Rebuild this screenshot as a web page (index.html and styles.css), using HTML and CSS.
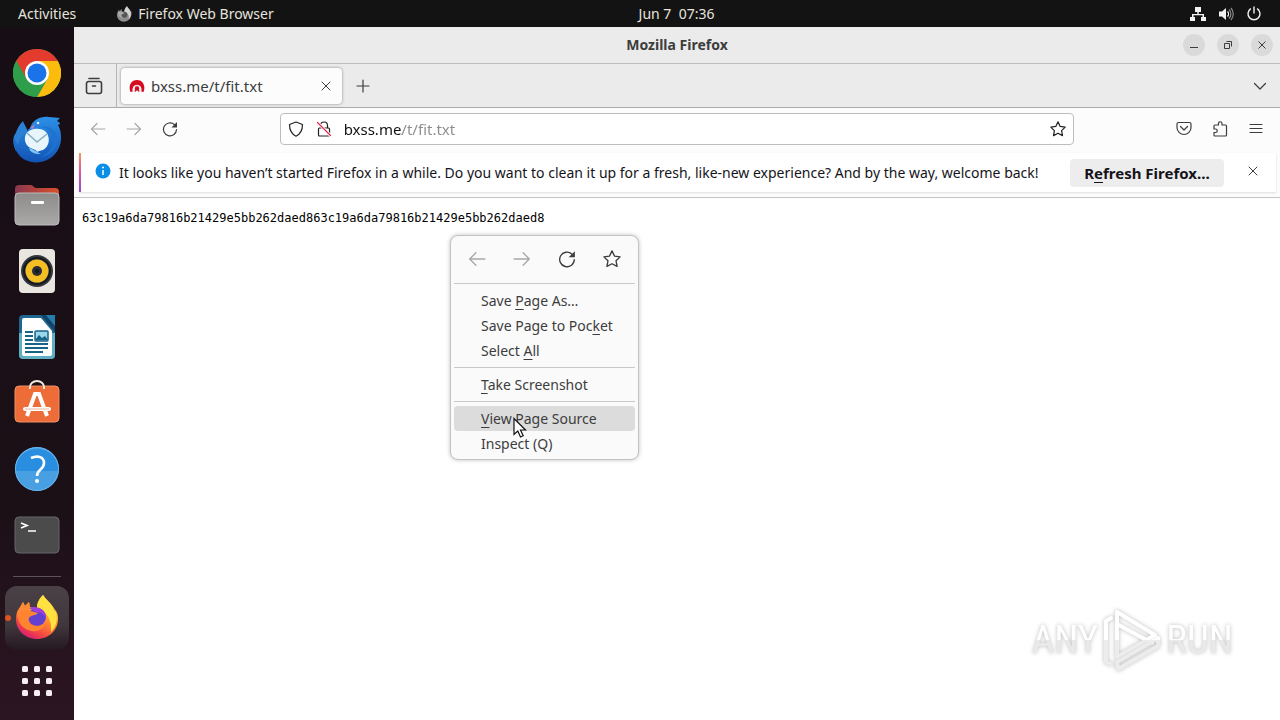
FILE: index.html
```html
<!DOCTYPE html>
<html lang="en">
<head>
    <meta charset="UTF-8">
    <meta name="viewport" content="width=device-width, initial-scale=1.0">
    <title>Mozilla Firefox</title>
    <link rel="stylesheet" href="styles.css">
</head>
<body>
    <header class="topbar">
        <div class="topbar-left">
            <button class="topbar-button">Activities</button>
            <button class="topbar-button app-menu">
                <svg width="16" height="16" viewBox="0 0 48 48">
                    <path fill="#8d8d8d" d="M3 27C3 20 6 15 9 11l2 5 6-7 1 7 7 2C25 10 29 4 33 1c2 6 9 9 11 16l2-1c3 17-7 31-22 31C12 47 3 39 3 27z"/>
                    <path fill="#d2d2d2" d="M33 1c2 6 9 9 11 16 2 8 0 17-6 23 3-12-3-20-13-22C25 10 29 4 33 1z"/>
                    <circle cx="25" cy="26" r="9" fill="#555"/>
                    <path fill="#aaa" d="M6 19c6-4 12 0 20 1-3 4-8 3-10 6-1 3 2 7 7 9-10 2-17-5-17-16z"/>
                </svg>
                <span>Firefox Web Browser</span>
            </button>
        </div>
        <button class="topbar-button clock">Jun 7&nbsp; 07:36</button>
        <button class="topbar-button system" aria-label="System">
            <svg width="16" height="16" viewBox="0 0 16 16" fill="#f2f2f2">
                <path d="M5 1h6v5H8.700v2H14v3h2v4h-5v-4h1.500V9.300h-9V11H5v4H0v-4h2V8h5.300V6H5z"/>
            </svg>
            <svg width="16" height="16" viewBox="0 0 16 16">
                <path fill="#f2f2f2" d="M1 5.500h3L8 2v12l-4-3.500H1z"/>
                <path fill="none" stroke="#f2f2f2" stroke-width="1.300" d="M9.500 5.500c1.300 1.300 1.300 3.700 0 5"/>
                <path fill="none" stroke="#8a8a8a" stroke-width="1.200" d="M11 3.500c2.500 2.500 2.500 6.500 0 9M13 2c3 3.500 3 8.500 0 12"/>
            </svg>
            <svg width="16" height="16" viewBox="0 0 16 16" fill="none" stroke="#f2f2f2" stroke-width="1.400" stroke-linecap="round">
                <path d="M8 1v6M4.500 2.900a6 6 0 1 0 7 0"/>
            </svg>
        </button>
    </header>

    <div class="desktop">
        <nav class="dock" aria-label="Dock">
            <button class="dock-item" aria-label="Google Chrome">
                <svg width="48" height="48" viewBox="0 0 48 48">
                    <circle cx="24" cy="24" r="24" fill="#2f9e4b"/>
                    <path fill="#fbbc0e" d="M24 12h20.800A24 24 0 0 1 24 48l10.400-18z"/>
                    <path fill="#e33b2e" d="M3.200 12a24 24 0 0 1 41.600 0H24L13.600 30z"/>
                    <path fill="#2f9e4b" d="M3.200 12l10.400 18L24 36l10.400-6L24 48A24 24 0 0 1 3.200 12z"/>
                    <circle cx="24" cy="24" r="12" fill="#fff"/>
                    <circle cx="24" cy="24" r="9.500" fill="#1a73e8"/>
                </svg>
            </button>
            <button class="dock-item" aria-label="Thunderbird">
                <svg width="48" height="48" viewBox="0 0 48 48">
                    <defs>
                        <linearGradient id="bird" x1="0" y1="0" x2="0" y2="1">
                            <stop offset="0" stop-color="#2c90e8"/>
                            <stop offset="1" stop-color="#1253b4"/>
                        </linearGradient>
                    </defs>
                    <path fill="#2b80d6" d="M1 21c2-2 3-9 9-15 1 4 5 7 4 12l-2 10L3 36C0 30 0 25 1 21z"/>
                    <path fill="url(#bird)" d="M17 13C20 4 28 1 36 2c4 0 7 1 11 1l-3 3c2 1 3 2 3 3l-2 1c5 9 4 21-3 29-9 11-28 11-36 1-5-6-6-13-5-18 1 4 3 6 4 8 1-6 6-12 12-17z"/>
                    <path fill="#1e73d0" d="M28 12c9 1 14 8 12 17-2 7-7 11-13 13 8-1 16-6 17-15C46 18 39 10 28 12z"/>
                    <path fill="#e9f5fc" d="M13 19c4-6 15-7 20-2 5 6 3 15-3 18-3 1-5 1-6 2 0-1-1-2-4-3-7-2-10-9-7-15z"/>
                    <path fill="none" stroke="#87aebc" stroke-width="1.500" d="M14 18l10 9 10-8"/>
                    <path fill="#83c7f4" d="M16 33c4 1 6 3 12 6-7 0-11-2-12-6z"/>
                    <circle cx="25" cy="8" r="1.300" fill="#d9efff"/>
                    <path fill="#bd82bb" d="M17 13l5-4-2 5z"/>
                </svg>
            </button>
            <button class="dock-item" aria-label="Files">
                <svg width="48" height="48" viewBox="0 0 48 48">
                    <defs>
                        <linearGradient id="folderBack">
                            <stop offset="0" stop-color="#89374f"/>
                            <stop offset="1" stop-color="#dc5029"/>
                        </linearGradient>
                        <linearGradient id="folderFront" x1="0" y1="0" x2="0" y2="1">
                            <stop offset="0" stop-color="#8d8c8b"/>
                            <stop offset="1" stop-color="#aaa9a8"/>
                        </linearGradient>
                    </defs>
                    <path fill="url(#folderBack)" d="M2 8a4 4 0 0 1 4-4h12c2 0 3 3 5 3h19a4 4 0 0 1 4 4v18H2z"/>
                    <rect x="2" y="12" width="44" height="32" rx="4" fill="url(#folderFront)" stroke="#bdbcbb"/>
                    <rect x="18" y="20" width="13" height="3" rx="1" fill="#fff"/>
                </svg>
            </button>
            <button class="dock-item" aria-label="Rhythmbox">
                <svg width="48" height="48" viewBox="0 0 48 48">
                    <rect x="6" y="2" width="36" height="44" rx="4" fill="#e9e6df"/>
                    <circle cx="24" cy="24" r="16" fill="#34363d"/>
                    <circle cx="24" cy="24" r="13" fill="none" stroke="#17191f" stroke-width="2"/>
                    <circle cx="24" cy="24" r="11.500" fill="#f4bf22"/>
                    <circle cx="24" cy="24" r="5" fill="#292c34"/>
                    <circle cx="24" cy="24" r="2" fill="#111820"/>
                </svg>
            </button>
            <button class="dock-item" aria-label="LibreOffice Writer">
                <svg width="48" height="48" viewBox="0 0 48 48">
                    <path fill="#1e658f" d="M10 2h32v40a4 4 0 0 1-4 4H10a4 4 0 0 1-4-4V6a4 4 0 0 1 4-4z"/>
                    <path fill="#60afc3" d="M6 20h36v22a4 4 0 0 1-4 4H10a4 4 0 0 1-4-4z"/>
                    <path fill="#fff" d="M11 5h17l11 13v23a2 2 0 0 1-2 2H11a2 2 0 0 1-2-2V7a2 2 0 0 1 2-2z"/>
                    <path fill="#124467" d="M28 2h5l9 11v6z"/>
                    <path fill="#237eac" d="M33 2h9v11z"/>
                    <path stroke="#176487" stroke-width="2" d="M12 19h8M12 23h8M12 27h8M12 31h23M12 35h23M12 39h18"/>
                    <rect x="22" y="18" width="13" height="10" rx="1" fill="#9bd6eb" stroke="#176487" stroke-width="1.500"/>
                    <path fill="#176487" d="M22 27l4-5 3 3 3-2 3 4z"/>
                </svg>
            </button>
            <button class="dock-item" aria-label="Ubuntu Software">
                <svg width="48" height="48" viewBox="0 0 48 48">
                    <rect x="2" y="7" width="44" height="36" rx="4" fill="#ed6c38" stroke="#ef9068"/>
                    <path fill="none" stroke="#f4e9dc" stroke-width="2" d="M17 10V8a7 6 0 0 1 14 0v2"/>
                    <path fill="none" stroke="#fff" stroke-width="4" d="M14 37l8-22h4l8 22"/>
                    <path stroke="#fff" stroke-width="4" stroke-linecap="round" d="M12 30h24"/>
                    <path stroke="#e8b7a1" d="M12 30h24"/>
                </svg>
            </button>
            <button class="dock-item" aria-label="Help">
                <svg width="48" height="48" viewBox="0 0 48 48">
                    <circle cx="24" cy="24" r="22" fill="#48a0e3"/>
                    <path fill="#298de0" d="M2 26a22 22 0 1 1 44 0z"/>
                    <circle cx="24" cy="24" r="21.500" fill="none" stroke="#67b4ec"/>
                    <path fill="none" stroke="#fff" stroke-width="2.600" d="M18 13c7-3 13-1 13 5 0 7-7 6-7 13"/>
                    <circle cx="24" cy="36" r="2" fill="#fff"/>
                </svg>
            </button>
            <button class="dock-item" aria-label="Terminal">
                <svg width="48" height="48" viewBox="0 0 48 48">
                    <rect x="2" y="6" width="44" height="36" rx="4" fill="#4b4b4b" stroke="#676767"/>
                    <path fill="none" stroke="#fff" stroke-width="1.700" d="M8 12l6 2.500L8 17M15 20h8"/>
                </svg>
            </button>
            <hr class="dock-line">
            <button class="dock-item running" aria-label="Firefox">
                <svg width="48" height="48" viewBox="0 0 48 48">
                    <defs>
                        <linearGradient id="fox" x1="0.850" y1="0" x2="0.300" y2="1">
                            <stop offset="0" stop-color="#ffdc3e"/>
                            <stop offset="0.500" stop-color="#ff9130"/>
                            <stop offset="0.800" stop-color="#f34645"/>
                            <stop offset="1" stop-color="#d81b76"/>
                        </linearGradient>
                    </defs>
                    <path fill="url(#fox)" d="M3 25c0-6 2-10 5-13l2-4 2 4 4-4 1 5 7 1c0-6 3-10 6-13 3 5 7 7 10 12l3 4c2 3 2 6 2 8 0 11-9 20-21 20S3 36 3 25z"/>
                    <path fill="#ffe13f" d="M30 1c3 5 7 7 10 12l1 4 2 1c2 8 0 15-5 20 1-10-2-19-14-24 0-6 3-10 6-13z"/>
                    <circle cx="24" cy="23" r="9" fill="#6240d0"/>
                    <path fill="#a13dda" d="M16 14c8-3 17 1 17 10-3-5-6-6-10-6z"/>
                    <path fill="#ff8430" d="M4 18c4-4 9-2 13-1 3 1 6 1 8 2-3 3-8 2-9 5-2 4 2 8 8 8 4 0 6-1 8-3-1 6-7 9-13 8C10 36 4 28 4 18z"/>
                    <path fill="#ff8a35" d="M7 13l3-5 2 4 4-4 1 5-3 2-9 4z"/>
                </svg>
            </button>
            <button class="dock-item show-apps" aria-label="Show Applications">
                <svg width="32" height="32" viewBox="0 0 32 32" fill="#f7edf3">
                    <rect x="1" y="1" width="6" height="6" rx="1.500"/><rect x="13" y="1" width="6" height="6" rx="1.500"/><rect x="25" y="1" width="6" height="6" rx="1.500"/>
                    <rect x="1" y="13" width="6" height="6" rx="1.500"/><rect x="13" y="13" width="6" height="6" rx="1.500"/><rect x="25" y="13" width="6" height="6" rx="1.500"/>
                    <rect x="1" y="25" width="6" height="6" rx="1.500"/><rect x="13" y="25" width="6" height="6" rx="1.500"/><rect x="25" y="25" width="6" height="6" rx="1.500"/>
                </svg>
            </button>
        </nav>

        <main class="window">
            <div class="titlebar">
                <h1>Mozilla Firefox</h1>
                <div class="window-controls">
                    <button aria-label="Minimize"><svg width="16" height="16" viewBox="0 0 16 16"><path d="M4 10.500h8"/></svg></button>
                    <button aria-label="Restore"><svg width="16" height="16" viewBox="0 0 16 16"><path d="M4.500 6.500h5v5h-5zM6.500 4.500h5v5"/></svg></button>
                    <button aria-label="Close window"><svg width="16" height="16" viewBox="0 0 16 16"><path d="M4.500 4.500l7 7M11.500 4.500l-7 7"/></svg></button>
                </div>
            </div>

            <div class="tabstrip">
                <button class="icon-button view-button" aria-label="Firefox View">
                    <svg width="18" height="18" viewBox="0 0 18 18"><path d="M4 1.500h10M3.500 4.500h11a2 2 0 0 1 2 2v8a2 2 0 0 1-2 2h-11a2 2 0 0 1-2-2v-8a2 2 0 0 1 2-2zM7.500 9h3"/></svg>
                </button>
                <div class="tab">
                    <button class="tab-label">
                        <svg width="16" height="16" viewBox="0 0 16 16">
                            <path fill="#d70b20" d="M1.500 14C-1 8 2 2 8 2s9 6 6.500 12l-3-.5c1-3-.5-5.500-3.500-5.500s-4.500 2.500-3.500 5.500z"/>
                            <path fill="none" stroke="#fff" stroke-width="1.200" d="M4.200 14C2.500 5 13.500 5 11.800 14"/>
                            <circle cx="8" cy="10.500" r="2.200" fill="#d70b20"/>
                            <path stroke="#d70b20" stroke-width="1.500" d="M6 13.500l1-2M10 13.500l-1-2"/>
                        </svg>
                        <span>bxss.me/t/fit.txt</span>
                    </button>
                    <button class="icon-button tab-close" aria-label="Close tab"><svg width="16" height="16" viewBox="0 0 16 16"><path d="M4 4l8 8M12 4l-8 8"/></svg></button>
                </div>
                <button class="icon-button" aria-label="New tab"><svg width="16" height="16" viewBox="0 0 16 16"><path d="M8 2v12M2 8h12"/></svg></button>
                <button class="icon-button all-tabs" aria-label="List all tabs"><svg width="16" height="16" viewBox="0 0 16 16"><path d="M2.500 5.500L8 11l5.500-5.500"/></svg></button>
            </div>

            <div class="toolbar">
                <button class="icon-button" aria-label="Back" disabled><svg width="16" height="16" viewBox="0 0 16 16"><path d="M15 8H1.500M7 2.500L1.500 8 7 13.500"/></svg></button>
                <button class="icon-button" aria-label="Forward" disabled><svg width="16" height="16" viewBox="0 0 16 16"><path d="M1 8h13.500M9 2.500L14.500 8 9 13.500"/></svg></button>
                <button class="icon-button" aria-label="Reload"><svg width="16" height="16" viewBox="0 0 16 16"><path d="M14.500 8.500a6.500 6.500 0 1 1-2.200-5"/><path class="solid" d="M15 1v5.500H9.500z"/></svg></button>
                <div class="spring"></div>
                <div class="urlbar">
                    <button class="url-button" aria-label="Tracking protection"><svg width="16" height="16" viewBox="0 0 16 16"><path d="M8 1l6.500 2.500c0 5-1 9-6.500 11.700C2.500 12.500 1.500 8.500 1.500 3.500z"/></svg></button>
                    <button class="url-button" aria-label="Connection not secure">
                        <svg width="16" height="16" viewBox="0 0 16 16"><path d="M4.500 7V4.500a3.500 3.500 0 0 1 7 0V7M3.500 7h9a1 1 0 0 1 1 1v6a1 1 0 0 1-1 1h-9a1 1 0 0 1-1-1V8a1 1 0 0 1 1-1z"/><path stroke="#fff" stroke-width="3" d="M2 2l13 13"/><path class="strike" d="M1.500 1.500l13 13"/></svg>
                    </button>
                    <input class="url-input" type="text" value="bxss.me/t/fit.txt" aria-label="Address" spellcheck="false">
                    <button class="url-button" aria-label="Bookmark this page"><svg width="16" height="16" viewBox="0 0 16 16"><path d="M8 .8l2.200 4.600 5 .7-3.600 3.500.9 5L8 12.200l-4.500 2.400.9-5L.8 6.100l5-.7z"/></svg></button>
                </div>
                <div class="spring"></div>
                <button class="icon-button" aria-label="Save to Pocket"><svg width="16" height="16" viewBox="0 0 16 16"><path d="M2.500 1.500h11A1.500 1.500 0 0 1 15 3v3.500a7 7 0 0 1-14 0V3a1.500 1.500 0 0 1 1.500-1.500zM4.500 5.500L8 9l3.500-3.500"/></svg></button>
                <button class="icon-button" aria-label="Extensions"><svg width="16" height="16" viewBox="0 0 16 16"><path d="M6.500 4V2.500a1.700 1.700 0 0 1 3.500 0V4h3.500a1 1 0 0 1 1 1v9a1 1 0 0 1-1 1H3a1 1 0 0 1-1-1v-2.500h1.500a1.700 1.700 0 0 0 0-3.500H2V5a1 1 0 0 1 1-1z"/></svg></button>
                <button class="icon-button" aria-label="Open application menu"><svg width="16" height="16" viewBox="0 0 16 16"><path d="M2 3.500h12M2 7.500h12M2 11.500h12"/></svg></button>
            </div>

            <div class="notice-area">
                <div class="notice" role="alert">
                    <svg class="notice-icon" width="16" height="16" viewBox="0 0 16 16"><circle cx="8" cy="8" r="7.500" fill="#0a8ee8"/><circle cx="8" cy="4.500" r="1" fill="#fff"/><path stroke="#fff" stroke-width="1.500" d="M8 7v5"/></svg>
                    <p>It looks like you haven’t started Firefox in a while. Do you want to clean it up for a fresh, like-new experience? And by the way, welcome back!</p>
                    <button class="refresh-button">R<u>e</u>fresh Firefox…</button>
                    <button class="icon-button notice-close" aria-label="Close notification"><svg width="16" height="16" viewBox="0 0 16 16"><path d="M4 4l8 8M12 4l-8 8"/></svg></button>
                </div>
            </div>

            <div class="page">
                <pre>63c19a6da79816b21429e5bb262daed863c19a6da79816b21429e5bb262daed8</pre>

                <div class="context-menu" role="menu">
                    <div class="menu-icons">
                        <button aria-label="Go back" disabled><svg width="18" height="18" viewBox="0 0 16 16"><path d="M15 8H1.500M7 2.500L1.500 8 7 13.500"/></svg></button>
                        <button aria-label="Go forward" disabled><svg width="18" height="18" viewBox="0 0 16 16"><path d="M1 8h13.500M9 2.500L14.500 8 9 13.500"/></svg></button>
                        <button aria-label="Reload page"><svg width="18" height="18" viewBox="0 0 16 16"><path d="M14.500 8.500a6.500 6.500 0 1 1-2.200-5"/><path class="solid" d="M15 1v5.500H9.500z"/></svg></button>
                        <button aria-label="Bookmark page"><svg width="18" height="18" viewBox="0 0 16 16"><path d="M8 .8l2.200 4.600 5 .7-3.600 3.500.9 5L8 12.200l-4.500 2.400.9-5L.8 6.100l5-.7z"/></svg></button>
                    </div>
                    <hr>
                    <button class="menu-item" role="menuitem">Save <u>P</u>age As…</button>
                    <button class="menu-item" role="menuitem">Save Page to Poc<u>k</u>et</button>
                    <button class="menu-item" role="menuitem">Select <u>A</u>ll</button>
                    <hr>
                    <button class="menu-item" role="menuitem"><u>T</u>ake Screenshot</button>
                    <hr>
                    <button class="menu-item active" role="menuitem"><u>V</u>iew Page Source</button>
                    <button class="menu-item" role="menuitem">Inspect (Q)</button>
                    <svg class="cursor" width="14" height="22" viewBox="0 0 14 22"><path fill="#fff" stroke="#111" stroke-width="1.200" d="M1 1.500v16l3.800-3.500 2.700 6 2.700-1.200-2.700-5.800h5z"/></svg>
                </div>

                <div class="watermark">
                    <span>ANY</span>
                    <svg width="60" height="66" viewBox="0 0 60 66">
                        <defs>
                            <linearGradient id="mark" gradientUnits="userSpaceOnUse" x1="0" y1="0" x2="0" y2="66">
                                <stop offset="0.500" stop-color="#fff"/>
                                <stop offset="0.500" stop-color="#ececec"/>
                            </linearGradient>
                        </defs>
                        <g fill="none" stroke="url(#mark)" stroke-width="4" stroke-linejoin="round" stroke-linecap="round">
                            <path d="M9 11l-5 3v41l5 2"/>
                            <path d="M50 36L15 17v33l38-22L15 5v12"/>
                            <path d="M16 62l40-23v-8L15 55z"/>
                        </g>
                    </svg>
                    <span>RUN</span>
                </div>
            </div>
        </main>
    </div>
</body>
</html>
```

FILE: styles.css
```css
* {
    box-sizing: border-box;
}
body {
    margin: 0;
    min-height: 100vh;
    display: flex;
    flex-direction: column;
    font-family: "Noto Sans", sans-serif;
    font-size: 14px;
    line-height: 20px;
    color: #3d3d3d;
    background: #fff;
}
button {
    margin: 0;
    padding: 0;
    border: none;
    background: none;
    color: inherit;
    font: inherit;
}
svg {
    display: block;
    flex: none;
}
u {
    text-underline-offset: 3px;
    text-decoration-thickness: 1px;
    text-decoration-skip-ink: none;
}

/* top bar */
.topbar {
    display: grid;
    grid-template-columns: 17fr auto 15fr;
    align-items: center;
    height: 27px;
    padding: 0 18px;
    background: #131313;
    color: #e6e3df;
}
.topbar-left {
    display: flex;
    gap: 40px;
}
.topbar-button {
    display: flex;
    align-items: center;
    gap: 6px;
    white-space: nowrap;
}
.system {
    justify-self: end;
    gap: 12px;
}

/* dock */
.desktop {
    flex: 1;
    display: flex;
}
.dock {
    display: flex;
    flex-direction: column;
    align-items: center;
    gap: 2px;
    flex: none;
    width: 74px;
    padding-top: 14px;
    background: linear-gradient(#170d14, #1c1017 70%, #2c1522);
}
.dock-item {
    display: flex;
    align-items: center;
    justify-content: center;
    width: 64px;
    height: 64px;
    border-radius: 12px;
}
.dock-item.running {
    position: relative;
    background: linear-gradient(#4a4146, #41383d 60%, #251820);
}
.running::before {
    content: "";
    position: absolute;
    left: 0;
    top: 29px;
    width: 6px;
    height: 6px;
    border-radius: 50%;
    background: #df5224;
}
.dock-line {
    width: 48px;
    margin: 7px 0;
    border: none;
    border-top: 1px solid #5d5459;
}
.show-apps {
    height: 58px;
}

/* window */
.window {
    flex: 1;
    min-width: 0;
    display: flex;
    flex-direction: column;
}
.titlebar {
    display: grid;
    grid-template-columns: 1fr auto 1fr;
    align-items: center;
    height: 37px;
    padding: 0 7px;
    background: #ebebeb;
    border-bottom: 1px solid #bcbcbc;
}
.titlebar h1 {
    grid-column: 2;
    margin: 0;
    font-size: 14px;
    line-height: 20px;
    font-weight: bold;
}
.window-controls {
    display: flex;
    justify-content: flex-end;
    gap: 12px;
}
.window-controls button {
    display: flex;
    align-items: center;
    justify-content: center;
    width: 22px;
    height: 22px;
    border-radius: 50%;
    background: #dadada;
}
.window-controls svg {
    fill: none;
    stroke: #3d3d3d;
}
.icon-button {
    display: flex;
    align-items: center;
    justify-content: center;
    width: 36px;
    height: 32px;
    flex: none;
}
.icon-button svg,
.url-button svg,
.menu-icons svg {
    fill: none;
    stroke: #3d3d3d;
    stroke-width: 1.2;
    stroke-linejoin: round;
    stroke-linecap: round;
}
button:disabled svg {
    stroke: #a8a8a8;
}
svg .solid {
    fill: #3d3d3d;
    stroke: none;
}
svg .strike {
    stroke: #e22850;
}

.tabstrip {
    display: flex;
    align-items: center;
    height: 44px;
    padding-right: 2px;
    background: #ebebeb;
    border-bottom: 1px solid #a9a9a9;
}
.view-button {
    width: 43px;
    height: 100%;
    margin-right: 4px;
    padding-right: 3px;
    border-right: 1px solid #b5b5b5;
}
.view-button svg {
    stroke-width: 1.6;
}
.tab {
    display: flex;
    align-items: center;
    width: 221px;
    height: 36px;
    margin-right: 3px;
    padding: 0 8px;
    border-radius: 4px;
    background: #fcfcfc;
    box-shadow: 0 0 3px #888;
}
.tab-label {
    flex: 1;
    display: flex;
    align-items: center;
    gap: 6px;
    font-size: 15px;
}
.tab-close {
    width: 16px;
}
.tab-close svg {
    stroke-width: 1;
}
.all-tabs {
    margin-left: auto;
}

.toolbar {
    display: flex;
    align-items: center;
    height: 41px;
    padding: 0 6px;
    background: #fcfcfc;
}
.spring {
    flex: 2;
}
.urlbar {
    flex: 17;
    display: flex;
    align-items: center;
    gap: 12px;
    height: 32px;
    padding: 0 7px;
    border: 1px solid #bdbdbd;
    border-radius: 4px;
    background: #fff;
}
.url-button svg {
    stroke: #222;
}
.url-input {
    flex: 1;
    min-width: 0;
    padding: 0;
    border: none;
    outline: none;
    font: inherit;
    font-size: 15px;
    color: transparent;
    /* host is dark, the rest of the address is dimmed */
    background: linear-gradient(to right, #111 58px, #8b8b8b 58px);
    -webkit-background-clip: text;
    background-clip: text;
}

.notice-area {
    padding: 4px 4px 5px 5px;
    background: #fcfcfc;
    border-bottom: 1px solid #c4c4c4;
}
.notice {
    display: flex;
    align-items: center;
    height: 39px;
    padding: 0 5px 0 14px;
    border-left: 2px solid;
    border-image: linear-gradient(#f39a55, #d957a5 50%, #8f4bd0) 1;
    background: #fff;
    box-shadow: 0 1px 2px #ddd;
    color: #15141a;
}
.notice-icon {
    margin-right: 8px;
    margin-bottom: 3px;
}
.notice p {
    flex: 1;
    margin: 0;
    white-space: nowrap;
}
.refresh-button {
    flex: none;
    width: 154px;
    height: 28px;
    border-radius: 4px;
    background: #ededed;
    font-size: 15px;
    font-weight: bold;
}
.notice-close {
    margin-left: 11px;
    padding-bottom: 4px;
}
.notice-close svg {
    stroke-width: 1;
}

/* page content */
.page {
    position: relative;
    flex: 1;
    background: #fff;
}
.page pre {
    margin: 0;
    padding: 10px 8px;
    font-family: "DejaVu Sans Mono", monospace;
    font-size: 12px;
    color: #000;
}

.context-menu {
    position: absolute;
    left: 376px;
    top: 37px;
    width: 189px;
    padding: 3px;
    border: 1px solid #c3c3c3;
    border-radius: 8px;
    background: #fafafa;
    box-shadow: 0 0 4px rgba(0, 0, 0, 0.25);
}
.context-menu hr {
    margin: 4px 0;
    border: none;
    border-top: 1px solid #c9c9c9;
}
.menu-icons {
    display: grid;
    grid-template-columns: repeat(4, 1fr);
    height: 40px;
}
.menu-icons button {
    display: flex;
    align-items: center;
    justify-content: center;
}
.menu-item {
    display: block;
    width: 100%;
    height: 25px;
    padding-left: 27px;
    border-radius: 4px;
    text-align: left;
    white-space: nowrap;
}
.menu-item.active {
    background: #dcdcdc;
}
.cursor {
    position: absolute;
    left: 62px;
    top: 181px;
}

.watermark {
    position: absolute;
    right: 47px;
    bottom: 47px;
    display: flex;
    align-items: center;
    gap: 4px;
    font-family: "Roboto Condensed", Roboto, sans-serif;
    font-size: 39px;
    line-height: 40px;
    color: #fff;
    filter: drop-shadow(0 0 2px #bbb);
}
.watermark span {
    background: linear-gradient(#fff 50%, #e9e9e9 50%);
    -webkit-background-clip: text;
    background-clip: text;
    color: transparent;
}
```
